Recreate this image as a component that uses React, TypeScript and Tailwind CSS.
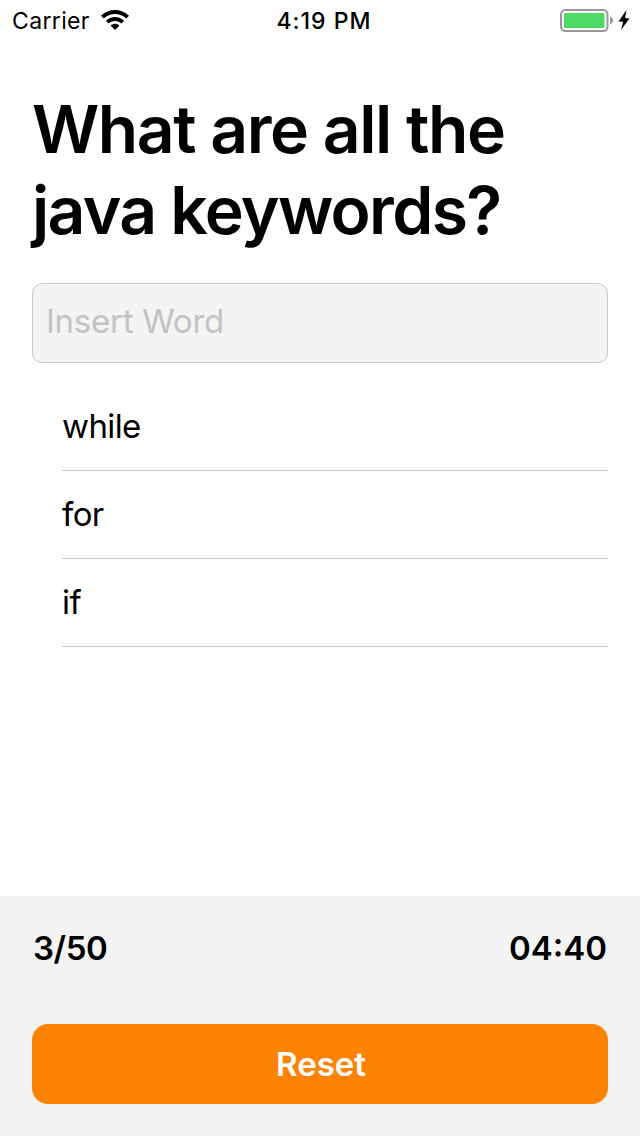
const words = ["while", "for", "if"];

function StatusBar() {
  return (
    <header className="grid h-10 grid-cols-3 items-center pr-2.5 pl-3 text-[23px] leading-[38px]">
      <div className="flex items-center gap-[11px]">
        <span className="pt-0.5 tracking-[0.35px]">Carrier</span>
        <svg className="h-[22px] w-7" viewBox="0 0 28 22">
          <path d="M0 6.8C7.6-.9 20.4-.9 28 6.8l-2.7 2.8c-6.2-6.2-16.4-6.2-22.6 0z" />
          <path d="M4.9 11.8c5-5.1 13.2-5.1 18.2 0l-2.7 2.8c-3.5-3.6-9.3-3.6-12.8 0z" />
          <path d="M9.6 16.6c2.4-2.5 6.4-2.5 8.8 0L14 21z" />
        </svg>
      </div>
      <div className="pt-0.5 pl-1.5 text-center font-medium tracking-[1px]">4:19 PM</div>
      <div className="flex items-center justify-end gap-1">
        <svg className="h-6 w-[54px]" viewBox="0 0 54 24" fill="none">
          <rect x="1" y="2" width="46.5" height="21" rx="4.5" stroke="#999" strokeWidth="2" />
          <rect x="4" y="5" width="40.5" height="15" rx="1.5" fill="#4cd964" />
          <path d="M50 8.5c4 1.5 4 6.5 0 8z" fill="#999" />
        </svg>
        <svg className="h-5 w-3" viewBox="0 0 12 20">
          <path d="M8.5 0 .5 11.4l4.7.4L3 20l8.5-11.5L7 8z" />
        </svg>
      </div>
    </header>
  );
}

export default function App() {
  return (
    <div className="flex h-[1136px] w-[640px] flex-col bg-white font-['Inter',sans-serif] text-black">
      <StatusBar />
      <main className="flex flex-1 flex-col px-8 pt-[49px]">
        <h1 className="text-[66px] leading-[81px] font-semibold">
          <span className="block tracking-[-1.45px]">What are all the</span>
          <span className="block tracking-[-1.7px]">java keywords?</span>
        </h1>
        <input
          aria-label="Word"
          placeholder="Insert Word"
          className="mt-8 h-20 rounded-[10px] border border-[#c8c8c8] bg-[#f4f4f4] px-[13px] pb-1 text-[33px] tracking-[-0.25px] outline-none placeholder:text-[#c2c2c6]"
        />
        <ul className="mt-5 ml-[30px]">
          {words.map((word) => (
            <li
              key={word}
              className="flex h-[88px] items-center border-b border-[#c8c7cc] text-[33px] tracking-[-0.6px]"
            >
              {word}
            </li>
          ))}
        </ul>
      </main>
      <footer className="h-60 bg-[#f4f4f4] px-8 pt-[33px]">
        <div className="flex h-10 items-center justify-between px-px text-[33px] font-semibold">
          <span className="tracking-[-0.4px]">3/50</span>
          <span>04:40</span>
        </div>
        <button className="mt-[55px] h-20 w-full rounded-2xl bg-[#ff8303] pt-0.5 pl-0.5 text-[33px] font-semibold text-white">
          Reset
        </button>
      </footer>
    </div>
  );
}
